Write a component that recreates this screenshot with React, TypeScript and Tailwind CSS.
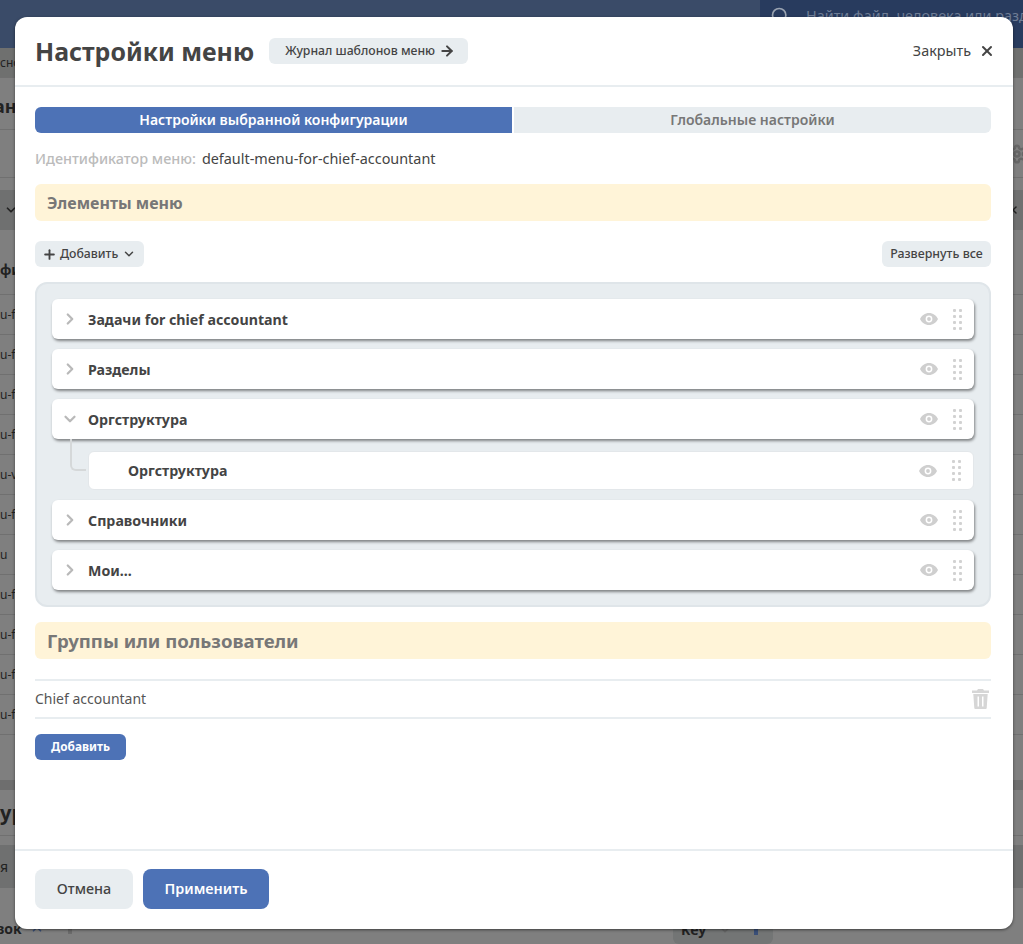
import React from 'react';
import { ArrowRight, ChevronDown, ChevronRight, ChevronUp, Plus, Search, Settings, X } from 'lucide-react';

const Eye = () => (
  <svg width="18" height="12" viewBox="0 0 18 12" className="text-[#cfcfcf]">
    <path
      fill="currentColor"
      fillRule="evenodd"
      d="M9 0C5 0 1.700 2.500 0 6c1.700 3.500 5 6 9 6s7.300-2.500 9-6c-1.700-3.500-5-6-9-6zm0 9.400a3.400 3.400 0 1 1 0-6.800 3.400 3.400 0 0 1 0 6.800zm0-5.300a1.900 1.900 0 1 0 0 3.800 1.900 1.900 0 0 0 0-3.800z"
    />
  </svg>
);

const Grip = () => (
  <svg width="9" height="21" viewBox="0 0 9 21" className="text-[#d2d2d2]">
    {[1.500, 7.500, 13.500, 19.500].map((y) => (
      <g key={y} fill="currentColor">
        <rect x="0" y={y - 1.500} width="3" height="3" rx="1" />
        <rect x="6" y={y - 1.500} width="3" height="3" rx="1" />
      </g>
    ))}
  </svg>
);

const Trash = () => (
  <svg width="17" height="20" viewBox="0 0 17 20" className="text-[#d6d6d6]">
    <path
      fill="currentColor"
      fillRule="evenodd"
      d="M6 0h5l1 1.500h5v2.500H0V1.500h5zM1.300 5h14.400l-1 14a1 1 0 0 1-1 1H3.300a1 1 0 0 1-1-1zM5.500 7.500v10h1.500v-10zm4.500 0v10h1.500v-10z"
    />
  </svg>
);

interface RowProps {
  label: string;
  open?: boolean;
}

const MenuRow: React.FC<RowProps> = ({ label, open }) => (
  <div className="flex h-10 items-center rounded-md bg-white pr-3 pl-[9px] shadow-[1px_2px_3px_rgba(0,0,0,0.45)]">
    <div className="flex w-[18px] justify-center text-[#b9b9b9]">
      {open ? <ChevronDown size={18} strokeWidth={3} /> : <ChevronRight size={18} strokeWidth={3} />}
    </div>
    <span className="ml-[9px] flex-1 pt-0.5 text-[14.2px] font-bold text-[#444]">{label}</span>
    <Eye />
    <div className="ml-[15px]">
      <Grip />
    </div>
  </div>
);

const bgRows = ['u-f', 'u-f', 'u-f', 'u-f', 'u-v', 'u-f', 'u', 'u-f', 'u-f', 'u-f', 'u-f'];

const Backdrop = () => (
  <div className="flex h-full flex-col bg-[#7f7f7f] text-[#222]">
    <div className="flex h-[48px] shrink-0 justify-end bg-[#3a4b68]">
      <div className="flex w-[263px] items-start gap-3 bg-[#283b5e] pt-[5px] pl-[10px] text-[14.4px] whitespace-nowrap text-[#6f7d95]">
        <Search size={22} className="text-[#9aa3b1]" />
        <span className="ml-1 overflow-hidden">Найти файл, человека или раздел</span>
      </div>
    </div>
    <div className="flex h-[30px] shrink-0 items-center overflow-hidden border-b border-[#707070] bg-[#6f706f] text-xs">сно</div>
    <div className="flex h-[52px] shrink-0 items-center justify-start overflow-hidden border-b border-[#707070] pt-1 text-lg font-bold">
      <span className="-ml-1.5">ан</span>
    </div>
    <div className="flex h-[48px] shrink-0 items-center justify-end border-b border-[#707070] text-[#666]">
      <Settings size={20} strokeWidth={3} className="-mr-1" />
    </div>
    <div className="mt-3 flex h-[40px] shrink-0 items-center justify-between bg-[#6f7070] px-1">
      <ChevronDown size={14} strokeWidth={3} />
      <X size={12} strokeWidth={3} />
    </div>
    <div className="flex h-[65px] shrink-0 items-end border-b border-[#707070] pb-[14px] text-sm font-bold">фи</div>
    {bgRows.map((t, i) => (
      <div key={i} className="flex h-[40px] shrink-0 items-center border-b border-[#707070] text-xs">
        {t}
      </div>
    ))}
    <div className="mt-[45px] h-[10px] shrink-0 bg-[#6e6e6e]" />
    <div className="flex h-[46px] shrink-0 items-center border-b border-[#707070] text-xl font-bold">ур</div>
    <div className="mt-[9px] flex h-[43px] shrink-0 items-center bg-[#6f7070] text-sm">я</div>
    <div className="flex flex-1 items-end justify-between pr-[250px] text-sm font-bold">
      <div className="-ml-1 flex items-center gap-2 pb-[5px]">
        <span>вок</span>
        <ChevronUp size={14} strokeWidth={3} className="text-[#3a4f78]" />
        <div className="ml-4 h-[10px] w-1 bg-[#6b6b6b]" />
      </div>
      <div className="flex h-[29px] w-[100px] items-center rounded-md bg-[#737575] px-2">
        Key
        <ChevronDown size={14} strokeWidth={3} className="ml-3 text-[#666]" />
        <div className="ml-[22px] h-[10px] w-1 bg-[#3a4f78]" />
      </div>
    </div>
  </div>
);

export default function App() {
  return (
    <div className="relative h-[944px] w-[1023px] overflow-hidden font-['Noto_Sans','Open_Sans',sans-serif]">
      <Backdrop />

      {/* Dialog */}
      <div className="absolute top-[17px] left-[15px] flex h-[912px] w-[998px] flex-col rounded-xl bg-white shadow-[0_1px_3px_rgba(0,0,0,0.5)]">
        <div className="flex h-[70px] shrink-0 items-center border-b-2 border-[#e8edf0] pr-[21px] pl-5">
          <h1 className="pt-0.5 text-[24.9px] font-bold text-[#444]">Настройки меню</h1>
          <button className="ml-[15px] flex h-[26px] items-center gap-1 rounded-md bg-[#e8edf0] pr-[13px] pl-4 text-[12.24px] font-medium text-[#444]">
            Журнал шаблонов меню
            <ArrowRight size={16} strokeWidth={3} />
          </button>
          <button className="-mr-[3px] ml-auto flex items-center gap-2 text-[14.4px] text-[#444]">
            Закрыть
            <X size={16} strokeWidth={3} />
          </button>
        </div>

        <div className="flex flex-1 flex-col pt-5 pr-[22px] pl-5">
          <div className="flex h-[26px] gap-0.5 text-sm font-semibold">
            <div className="flex flex-1 items-center justify-center rounded-l-md bg-[#4d72b6] text-white">
              Настройки выбранной конфигурации
            </div>
            <div className="flex flex-1 items-center justify-center rounded-r-md bg-[#e8edf0] text-[#777]">
              Глобальные настройки
            </div>
          </div>

          <div className="mt-4 flex h-[20px] items-center gap-1.5 text-[14.4px]">
            <span className="font-medium text-[#bbb]">Идентификатор меню:</span>
            <span className="text-[#444]">default-menu-for-chief-accountant</span>
          </div>

          <div className="mt-[15px] flex h-[37px] items-center rounded-md bg-[#fff4d8] px-3 text-base font-bold text-[#777]">
            Элементы меню
          </div>

          <div className="mt-5 flex h-[26px] items-center justify-between text-[12.24px] text-[#444]">
            <button className="flex h-full items-center rounded-md bg-[#e8edf0] pr-2 pl-[7px] font-medium">
              <Plus size={15} strokeWidth={3} />
              <span className="ml-[3px]">Добавить</span>
              <ChevronDown size={14} strokeWidth={2.500} className="ml-1" />
            </button>
            <button className="h-full w-[109px] rounded-md bg-[#e8edf0] text-center text-[12.4px] font-medium">Развернуть все</button>
          </div>

          <div className="mt-[15px] flex h-[325px] flex-col gap-[10px] rounded-xl border-2 border-[#dfe5e9] bg-[#e8edf0] px-[15px] pt-[15px]">
            <MenuRow label="Задачи for chief accountant" />
            <MenuRow label="Разделы" />
            <div className="relative">
              <MenuRow label="Оргструктура" open />
              <div className="absolute top-10 left-[18px] h-[32px] w-4 rounded-bl-md border-b-2 border-l-2 border-[#d5d8d9]" />
              <div className="mt-3 ml-9 flex h-[39px] items-center rounded-md border border-[#e3e7ea] bg-white pr-3 pl-[39px]">
                <span className="flex-1 text-[14.2px] font-bold text-[#444]">Оргструктура</span>
                <Eye />
                <div className="ml-[15px]">
                  <Grip />
                </div>
              </div>
            </div>
            <MenuRow label="Справочники" />
            <MenuRow label="Мои..." />
          </div>

          <div className="mt-[15px] flex h-[37px] items-center rounded-md bg-[#fff4d8] px-3 text-[18.6px] font-bold text-[#777]">
            Группы или пользователи
          </div>

          <div className="mt-5 flex h-10 items-center justify-between border-y-2 border-[#e8edf0] text-sm text-[#555]">
            <span>Chief accountant</span>
            <div className="mr-0.5">
              <Trash />
            </div>
          </div>

          <button className="mt-[15px] h-[26px] w-[91px] rounded-md bg-[#4d72b6] text-[11.8px] font-bold text-white">
            Добавить
          </button>
        </div>

        <div className="flex h-[80px] shrink-0 items-start gap-[10px] rounded-b-xl border-t-2 border-[#e8edf0] px-5 pt-[18px]">
          <button className="h-10 w-[98px] rounded-lg bg-[#e8edf0] text-[14.4px] font-medium text-[#444]">Отмена</button>
          <button className="h-10 w-[126px] rounded-lg bg-[#4d72b6] text-[14.4px] font-semibold text-white">Применить</button>
        </div>
      </div>
    </div>
  );
}
